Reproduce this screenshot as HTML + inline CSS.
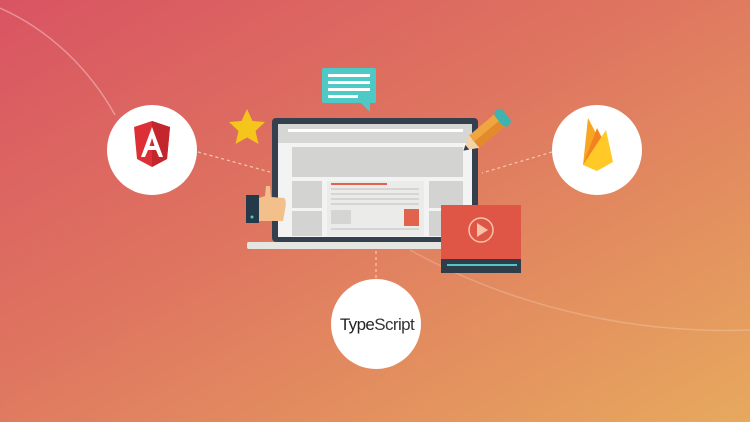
<!DOCTYPE html>
<html><head><meta charset="utf-8"><style>
html,body{margin:0;padding:0}
body{width:750px;height:422px;overflow:hidden;font-family:"Liberation Sans",sans-serif}
</style></head><body>
<svg width="750" height="422" viewBox="0 0 750 422" xmlns="http://www.w3.org/2000/svg">
<defs>
<linearGradient id="bg" x1="0" y1="0" x2="1" y2="1">
<stop offset="0" stop-color="#d95462"/>
<stop offset="0.45" stop-color="#df7660"/>
<stop offset="1" stop-color="#e7a95e"/>
</linearGradient>
</defs>
<rect width="750" height="422" fill="url(#bg)"/>
<path d="M0 8 C50 30 90 70 115 115" stroke="#fff" stroke-opacity="0.35" stroke-width="1.5" fill="none"/>
<path d="M410 250 C500 300 620 335 750 330" stroke="#fff" stroke-opacity="0.2" stroke-width="1.5" fill="none"/>
<g stroke="#f6c9b0" stroke-width="1.2" stroke-dasharray="3 3" fill="none">
<line x1="198" y1="152" x2="270" y2="172"/>
<line x1="552" y1="152" x2="482" y2="173"/>
<line x1="376" y1="251" x2="376" y2="279"/>
</g>
<circle cx="152" cy="150" r="45" fill="#fff"/>
<circle cx="597" cy="150" r="45" fill="#fff"/>
<circle cx="376" cy="324" r="45" fill="#fff"/>
<!-- Angular -->
<path d="M152 121 L134 127 L137 159 L152 167 L167 159 L170 127 Z" fill="#dd3036"/>
<path d="M152 121 L170 127 L167 159 L152 167 Z" fill="#c3262d"/>
<path d="M152 127 L141 157 L145 157 L148 150 L156 150 L159 157 L163 157 Z M149.5 146 L152 138 L154.5 146 Z" fill="#fff"/>
<!-- Firebase -->
<path d="M583 165 L588 118 L600 141 Z" fill="#f6a623"/>
<path d="M583 165 L597 128 L604 142 Z" fill="#f58220"/>
<path d="M583 165 L606 130 L613 162 L597 171 Z" fill="#ffca28"/>
<text x="377" y="330" text-anchor="middle" font-size="17" font-family="Liberation Sans,sans-serif" fill="#222" letter-spacing="-0.6">Type<tspan fill="#333">Script</tspan></text>
<!-- laptop -->
<rect x="272" y="118" width="206" height="124" rx="4" fill="#34404e"/>
<rect x="278" y="124" width="194" height="113" fill="#f3f3f3"/>
<rect x="278" y="124" width="194" height="19" fill="#d6d6d4"/>
<rect x="288" y="129" width="175" height="3" fill="#fff"/>
<rect x="292" y="147" width="171" height="30" fill="#d3d3d1"/>
<rect x="292" y="181" width="30" height="27" fill="#d3d3d1"/>
<rect x="292" y="211" width="30" height="25" fill="#d3d3d1"/>
<rect x="429" y="181" width="34" height="27" fill="#d3d3d1"/>
<rect x="429" y="211" width="34" height="25" fill="#d3d3d1"/>
<rect x="327" y="181" width="97" height="55" fill="#ebebe9"/>
<rect x="331" y="183" width="56" height="2" fill="#e0644c"/>
<g fill="#d5d5d3"><rect x="331" y="188" width="88" height="2"/><rect x="331" y="193" width="88" height="2"/><rect x="331" y="198" width="88" height="2"/><rect x="331" y="203" width="88" height="2"/><rect x="331" y="210" width="20" height="14"/><rect x="331" y="228" width="88" height="2"/></g>
<rect x="404" y="209" width="15" height="17" fill="#e0644c"/>
<rect x="247" y="242" width="198" height="7" rx="2" fill="#e5e5e2"/>
<!-- video -->
<rect x="441" y="205" width="80" height="68" fill="#e05646"/>
<rect x="441" y="259" width="80" height="14" fill="#2f3c4a"/>
<rect x="447" y="264" width="70" height="2" fill="#4fc9c5"/>
<circle cx="481" cy="230" r="12" fill="none" stroke="#f7c2a8" stroke-width="1.5"/>
<path d="M477 223 L488 230 L477 237 Z" fill="#f7c2a8"/>
<!-- bubble -->
<rect x="322" y="68" width="54" height="35" rx="2" fill="#4fc9c5"/>
<path d="M360 102 L370 112 L370 102 Z" fill="#4fc9c5"/>
<g fill="#fff"><rect x="328" y="74" width="42" height="3"/><rect x="328" y="81" width="42" height="3"/><rect x="328" y="88" width="42" height="3"/><rect x="328" y="95" width="30" height="3"/></g>
<!-- star -->
<path d="M247 109 L252.5 121 L265 122 L255.5 131 L258.5 144 L247 137.5 L235.5 144 L238.5 131 L229 122 L241.5 121 Z" fill="#f6c51c"/>
<!-- pencil -->
<g transform="rotate(-40 488 130)">
<rect x="470" y="122" width="34" height="16" fill="#f0a640"/>
<rect x="470" y="130" width="34" height="8" fill="#e38a2c"/>
<path d="M470 122 L456 130 L470 138 Z" fill="#f3d3a8"/>
<path d="M461 127 L456 130 L461 133 Z" fill="#34404e"/>
<rect x="502" y="120" width="10" height="20" rx="5" fill="#3fb3b0"/>
</g>
<!-- thumb -->
<rect x="246" y="195" width="13" height="28" fill="#24394a"/>
<circle cx="252" cy="217" r="1.5" fill="#4fc9c5"/>
<path d="M259 198 L265 196 L266 186 L270 186 L271 197 L284 198 Q287 200 285 210 L283 221 L259 221 Z" fill="#f3c08c"/>
</svg>
</body></html>
